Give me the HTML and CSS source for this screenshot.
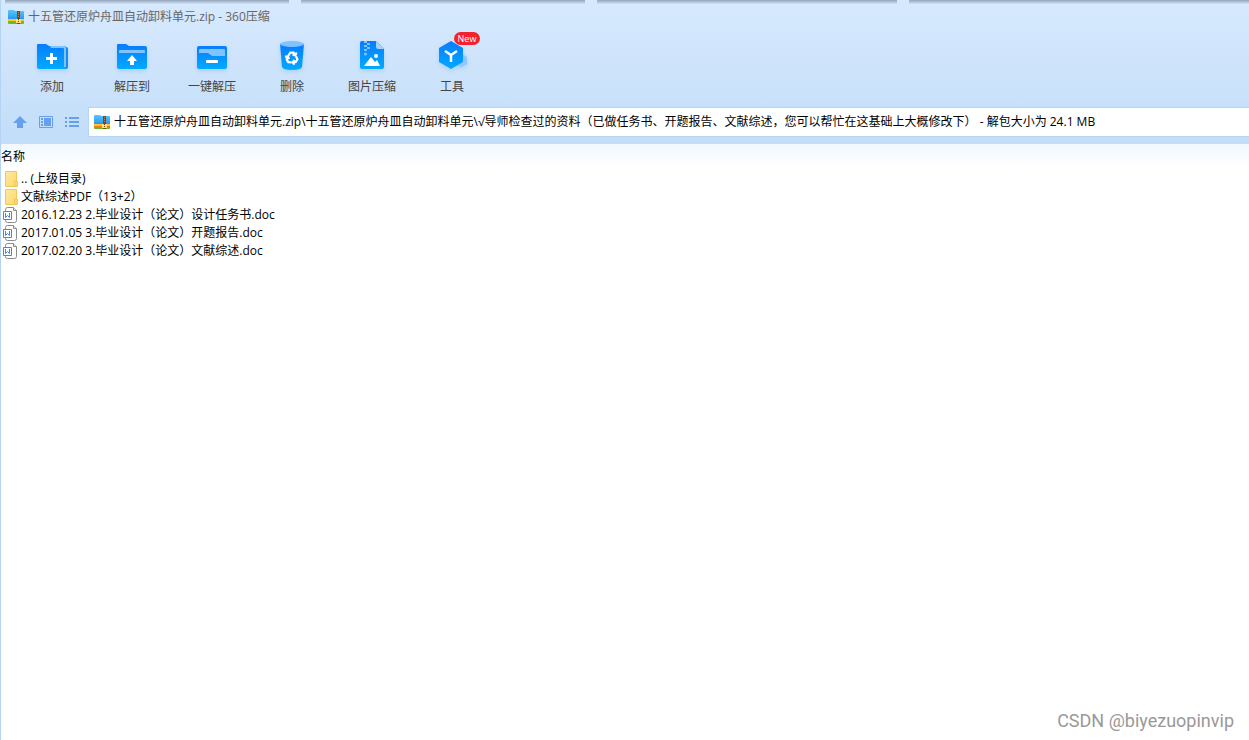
FILE: index.html
```html
<!DOCTYPE html>
<html lang="zh-CN">
<head>
<meta charset="utf-8">
<title>360压缩</title>
<link rel="stylesheet" href="styles.css">
</head>
<body>
<svg class="defs" aria-hidden="true">
  <defs>
    <linearGradient id="blue" x1="0" y1="0" x2="0" y2="1"><stop offset="0" stop-color="#087cff"/><stop offset="1" stop-color="#00aaff"/></linearGradient>
    <linearGradient id="sky" x1="0" y1="0" x2="0" y2="1"><stop offset="0" stop-color="#5cc6fb"/><stop offset="1" stop-color="#1f95ee"/></linearGradient>
    <linearGradient id="gold" x1="0" y1="0" x2="1" y2="1"><stop offset="0" stop-color="#ffe9a2"/><stop offset="1" stop-color="#fad869"/></linearGradient>
    <symbol id="zip" viewBox="0 0 16 14">
      <path d="M0 1q0-1 1-1h5l1 1h8q1 0 1 1v8H0z" fill="url(#sky)"/>
      <path d="M0 9h16v2H0z" fill="#ffc61a"/><path d="M0 11h16v1H0z" fill="#f47b20"/><path d="M0 12h16v1q0 1-1 1H1q-1 0-1-1z" fill="#72b52c"/>
      <path d="M9 1h3v13H9z" fill="#8c4210"/><path d="M10 2h1v1h-1zM10 4h1v1h-1zM10 6h1v1h-1z" fill="#c98440"/>
      <path d="M8 9h5v4H8z" fill="#ffdf70"/><path d="M10 8h1v2h-1zM10 11h1v1h-1z" fill="#75400b"/>
    </symbol>
    <symbol id="folder" viewBox="0 0 14 16">
      <path d="M2.500.500h11v15h-11z" fill="url(#gold)" stroke="#efc957"/><path d="M11.500 15v-5l3 .500v5z" fill="#fad869" stroke="#efc957"/>
    </symbol>
    <symbol id="doc" viewBox="0 0 14 16">
      <path d="M2.500 2.500q0-2 2-2h6l3 3v10q0 2-2 2h-7q-2 0-2-2z" fill="#fff" stroke="#8c8c8c"/><path d="M10.500.500v3h3" fill="#eee" stroke="#8c8c8c"/>
      <path d="M0 4h10v9H0z" fill="#fff"/><path d="M.5 4.500h8v8h-8z" fill="#fff" stroke="#4285ed"/><path d="M2.500 6v4.500l2-2 2 2V6" fill="none" stroke="#4285ed"/>
    </symbol>
  </defs>
</svg>
<div class="window">
  <header class="top">
    <div class="edge"><i></i><i></i><i></i><i></i></div>
    <h1 class="title"><svg class="zip"><use href="#zip"/></svg>十五管还原炉舟皿自动卸料单元.zip - 360压缩</h1>
    <nav class="toolbar">
      <button class="tool"><svg viewBox="0 0 36 36">
        <path d="M31 7h1q2 0 2 2v18q0 2-2 2h-1z" fill="#1489fa"/><path d="M3 5q0-1 1-1h8l3 2h15q2 0 2 2v21H5q-2 0-2-2z" fill="url(#blue)"/><path d="M16 6h14q2 0 2 2v19h-2V9q0-1-1-1H17z" fill="#80c3ff"/><path d="M16 13h3v4h4v3h-4v4h-3v-4h-4v-3h4z" fill="#fff"/></svg>添加</button>
      <button class="tool"><svg viewBox="0 0 36 36">
        <path d="M3 5q0-1 1-1h8l3 2h16q2 0 2 2v19q0 2-2 2H5q-2 0-2-2z" fill="url(#blue)"/><path d="M5 13v-2q0-1 1-1h24q1 0 1 1v2z" fill="#80c3ff"/><path d="M18 15l5 6h-3v4h-4v-4h-3z" fill="#fff"/></svg>解压到</button>
      <button class="tool"><svg viewBox="0 0 36 36">
        <rect x="3" y="6" width="30" height="23" rx="2" fill="url(#blue)"/><path d="M5 13v-3q0-1 1-1h24q1 0 1 1v6H18l-4-3z" fill="#80c3ff"/><rect x="12" y="20" width="12" height="3" rx="1" fill="#fff"/></svg>一键解压</button>
      <button class="tool"><svg viewBox="0 0 36 36">
        <path d="M6 4h24l-2 23q-1 3-10 3T8 27z" fill="url(#blue)"/><ellipse cx="18" cy="4" rx="12" ry="3" fill="#80c3ff"/>
        <g fill="none" stroke="#fff" stroke-width="2.200"><path id="arm" d="M14.500 15.500l1.800-2.800h3.200l1.300 2M22.500 12.500l-1 2.800-3-.500"/><use href="#arm" transform="rotate(120 18 18)"/><use href="#arm" transform="rotate(240 18 18)"/></g></svg>删除</button>
      <button class="tool"><svg viewBox="0 0 36 36">
        <path d="M8 1h14l8 8v18q0 2-2 2H8q-2 0-2-2V3q0-2 2-2z" fill="url(#blue)"/><path d="M22 1l8 8h-6q-2 0-2-2z" fill="#a4d4ff"/><path d="M10 1h3v2h-3zM13 3h3v2h-3zM10 5h3v2h-3zM13 7h3v2h-3zM10 9h3v2h-3z" fill="#80c3ff"/><circle cx="11.500" cy="14" r="1.500" fill="#80c3ff"/><path d="M10 26l7-9 4 5 2-2 3 6z" fill="#fff"/><circle cx="22" cy="16" r="2" fill="#fff"/></svg>图片压缩</button>
      <button class="tool"><svg viewBox="0 0 36 36">
        <path d="M28 14l5 3v7l-6 3-6-3 7-4z" fill="#8dc7ff"/><path d="M17 1l12 7v14l-12 7-12-7V8z" fill="url(#blue)"/><path d="M11 11l6 4 6-4M17 15v7" fill="none" stroke="#fff" stroke-width="2.500"/></svg>工具<span class="badge">New</span></button>
    </nav>
    <div class="location">
      <button class="nav" aria-label="上级"><svg viewBox="0 0 16 16"><path d="M8 2l7 7h-4v5H5V9H1z" fill="#669fed"/></svg></button>
      <button class="nav" aria-label="视图"><svg viewBox="0 0 16 16"><path d="M1.500 2.500h13v11h-13z" fill="none" stroke="#669fed"/><path d="M3 4h2v2H3zM3 7h2v2H3zM3 10h2v2H3zM6 4h7v8H6z" fill="#669fed"/></svg></button>
      <button class="nav" aria-label="列表"><svg viewBox="0 0 16 16"><path d="M1 3h2v2H1zM1 7h2v2H1zM1 11h2v2H1zM5 3h10v2H5zM5 7h10v2H5zM5 11h10v2H5z" fill="#669fed"/></svg></button>
      <label class="address"><svg class="zip"><use href="#zip"/></svg><input aria-label="路径" value="十五管还原炉舟皿自动卸料单元.zip\十五管还原炉舟皿自动卸料单元\√导师检查过的资料（已做任务书、开题报告、文献综述，您可以帮忙在这基础上大概修改下） - 解包大小为 24.1 MB"></label>
    </div>
  </header>
  <main class="files">
    <table>
      <thead><tr><th>名称</th></tr></thead>
      <tbody>
        <tr><td><div class="file"><svg class="icon"><use href="#folder"/></svg>.. (上级目录)</div></td></tr>
        <tr><td><div class="file"><svg class="icon"><use href="#folder"/></svg>文献综述PDF（13+2）</div></td></tr>
        <tr><td><div class="file"><svg class="icon"><use href="#doc"/></svg>2016.12.23 2.毕业设计（论文）设计任务书.doc</div></td></tr>
        <tr><td><div class="file"><svg class="icon"><use href="#doc"/></svg>2017.01.05 3.毕业设计（论文）开题报告.doc</div></td></tr>
        <tr><td><div class="file"><svg class="icon"><use href="#doc"/></svg>2017.02.20 3.毕业设计（论文）文献综述.doc</div></td></tr>
      </tbody>
    </table>
  </main>
  <footer class="mark">CSDN @biyezuopinvip</footer>
</div>
</body>
</html>
```
FILE: styles.css
```css
* { box-sizing: border-box; }
body { margin: 0; font: 12px/18px "Open Sans", "Noto Sans CJK SC", sans-serif; color: #000; background: #fff; }
button, input { font: inherit; color: inherit; border: 0; padding: 0; background: none; }
svg { display: block; flex: none; overflow: visible; }
symbol { overflow: visible; }
.defs { position: absolute; width: 0; height: 0; }
.window { min-height: 100vh; display: flex; flex-direction: column; border-left: 1px solid #b5d4f5; }
.top { background: linear-gradient(#d6e9fe, #cfe4fb 60px, #c3def9 136px); padding-bottom: 8px; }
.edge { display: grid; grid-template-columns: 284fr 284fr 301fr 340fr; gap: 12px; height: 4px; padding-left: 4px; }
.edge i { background: linear-gradient(#94a5b8, #d0e3f8); }
.title { display: flex; align-items: center; gap: 4px; margin: 0; padding: 4px 7px; font-size: 12px; font-weight: 400; color: #666; }
.zip { width: 16px; height: 14px; }
.toolbar { display: flex; padding: 10px 11px 12px; }
.tool { position: relative; width: 80px; display: flex; flex-direction: column; align-items: center; gap: 2px; color: #444; white-space: nowrap; }
.tool svg { width: 36px; height: 36px; filter: drop-shadow(0 2px 2px #78b4f066); }
.badge { position: absolute; left: 42px; top: -8px; width: 26px; height: 13px; border-radius: 7px; background: #f5222d; color: #fff; font-size: 9px; line-height: 13px; text-align: center; }
.location { display: flex; align-items: center; gap: 10px; padding-left: 11px; }
.nav svg { width: 16px; height: 16px; }
.address { flex: 1; display: flex; align-items: center; gap: 4px; height: 28px; margin-left: -1px; padding-left: 5px; background: #fff; box-shadow: 0 0 0 1px #b8d5f3; }
.address input { flex: 1; min-width: 0; outline: 0; }
.files { flex: 1; background: linear-gradient(#f2f8ff, #fff 24px); }
table { width: 100%; border-collapse: collapse; }
th, td { padding: 0; text-align: left; font-weight: 400; }
th { height: 26px; }
.file { display: flex; align-items: center; gap: 4px; height: 18px; padding-left: 2px; white-space: nowrap; }
.icon { width: 14px; height: 16px; }
.mark { align-self: flex-end; padding: 0 15px 7px; font: 18px/24px Roboto, "Liberation Sans", sans-serif; color: #999; }
```
